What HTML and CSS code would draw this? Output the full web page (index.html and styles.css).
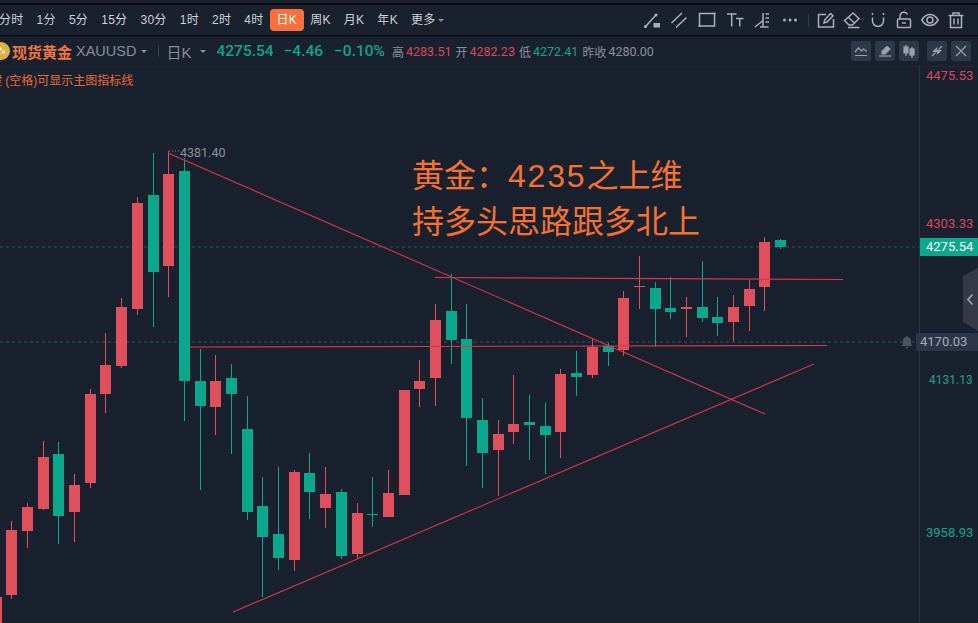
FILE: index.html
```html
<!DOCTYPE html>
<html lang="zh-CN">
<head>
  <meta charset="UTF-8">
  <title>现货黄金 XAUUSD 日K</title>
  <link rel="stylesheet" href="styles.css">
</head>
<body>
  <div class="top-gap"></div>

  <div class="toolbar">
    <div class="periods">
      <span class="period">分时</span>
      <span class="period">1分</span>
      <span class="period">5分</span>
      <span class="period">15分</span>
      <span class="period">30分</span>
      <span class="period">1时</span>
      <span class="period">2时</span>
      <span class="period">4时</span>
      <span class="period active">日K</span>
      <span class="period">周K</span>
      <span class="period">月K</span>
      <span class="period">年K</span>
      <span class="period">更多<i class="caret"></i></span>
    </div>
    <div class="tools">
      <div class="tool-group draw">
        <svg class="tool" viewBox="0 0 18 18"><path d="M2.5 15.5 13 4"/><circle class="solid" cx="2.5" cy="15.5" r="1.6"/><circle class="solid" cx="13" cy="4" r="1.6"/><rect class="solid" x="10.5" y="12" width="6.5" height="4.5"/></svg>
        <svg class="tool" viewBox="0 0 18 18"><path d="M1.5 12 12 2M6 16.5 16.5 6.5"/></svg>
        <svg class="tool" viewBox="0 0 18 18"><rect x="1.5" y="2.5" width="15" height="12.5"/><circle class="solid" cx="1.5" cy="15" r="1.1"/><circle class="solid" cx="16.5" cy="2.5" r="1.1"/></svg>
        <svg class="tool" viewBox="0 0 18 18"><path d="M1 3h9.5M5.7 3v12.5M10 7.5h7.5M13.8 7.5v8"/></svg>
        <svg class="tool" viewBox="0 0 18 18"><path d="M2 16 10 9.5M10 2v14M7 16h8.5M12.5 3h3.5M12.5 7h3.5M12.5 11h3.5"/></svg>
        <svg class="tool" viewBox="0 0 18 18"><circle class="solid" cx="3.5" cy="9" r="1.5"/><circle class="solid" cx="9" cy="9" r="1.5"/><circle class="solid" cx="14.5" cy="9" r="1.5"/></svg>
      </div>
      <span class="tool-sep"></span>
      <div class="tool-group edit">
        <svg class="tool" viewBox="0 0 18 18"><path d="M9 3.5H1.5V16h15V8M7 12l.6-3L13.5 2.5l2.5 2.3L10 11Z"/></svg>
        <svg class="tool" viewBox="0 0 18 18"><path d="M1.5 9.5 10 2l6 5.5-6.5 6.5H6ZM5.5 6.5l6 5.5M5 16.5h11.5"/></svg>
        <svg class="tool" viewBox="0 0 18 18"><path d="M3.5 2v2M14.5 2v2M3.5 6.5V10a5.5 5.5 0 0 0 11 0V6.500"/></svg>
        <svg class="tool" viewBox="0 0 18 18"><path d="M5 8V5a4 4 0 0 1 7.600-1.500"/><rect x="2.500" y="8" width="13" height="8.500" rx="1"/><path d="M7 12h4"/></svg>
        <svg class="tool" viewBox="0 0 18 18"><path d="M.8 9C3 5.300 6 3.500 9 3.500S15 5.300 17.200 9C15 12.700 12 14.500 9 14.500S3 12.700.8 9Z"/><circle cx="9" cy="9" r="3"/></svg>
        <svg class="tool" viewBox="0 0 18 18"><path d="M1.500 4.500h15M6 4.500V2h6v2.500M3.500 4.500V16.500h11V4.500M7 7.500v6M11 7.500v6"/></svg>
      </div>
    </div>
  </div>

  <div class="quote-bar">
    <svg class="coin" viewBox="0 0 18 18"><circle cx="9" cy="9" r="9"/><circle class="coin-mark" cx="8" cy="7" r="1.700"/><circle class="coin-mark" cx="11.500" cy="10" r="1.700"/><circle class="coin-mark" cx="6.500" cy="11.500" r="1.700"/></svg>
    <span class="name">现货黄金</span>
    <span class="symbol">XAUUSD</span><i class="caret symbol-caret"></i>
    <span class="quote-sep"></span>
    <span class="interval">日K</span><i class="caret interval-caret"></i>
    <span class="last">4275.54</span>
    <span class="change">−4.46</span>
    <span class="change pct">−0.10%</span>
    <div class="ohlc">
      <span>高</span><b class="up">4283.51</b>
      <span>开</span><b class="up">4282.23</b>
      <span>低</span><b class="down">4272.41</b>
      <span>昨收</span><b>4280.00</b>
    </div>
    <div class="chart-btns">
      <button class="chart-btn"><svg viewBox="0 0 20 20"><path d="M4 11l3.500-4 3 3 2-2 3.500 2.500M4 14.500h12"/></svg></button>
      <button class="chart-btn"><svg viewBox="0 0 20 20"><path class="fill" d="M7 10.500 12 5.500l3 2.500-5 5H7Z"/><path d="M4 15h12"/></svg></button>
      <button class="chart-btn"><svg viewBox="0 0 20 20"><path d="M7 4v11M13 6v11"/><rect class="fill" x="5" y="6" width="4" height="6"/><rect class="fill" x="11" y="8" width="4" height="6"/></svg></button>
      <button class="chart-btn gap"><svg viewBox="0 0 20 20"><path d="M5 15l3.500-3.500M15 5l-3.500 3.500"/><path class="fill" d="M9.500 10.500v-3l-3 3ZM10.500 9.500v3l3-3Z"/></svg></button>
      <button class="chart-btn"><svg viewBox="0 0 20 20"><path d="M5 5l10 10M15 5 5 15"/></svg></button>
    </div>
  </div>

  <div class="chart">
    <svg id="plot" class="plot" viewBox="0 67 978 556"></svg>

    <div class="hint">键 (空格)可显示主图指标线</div>
    <div class="peak">4381.40</div>

    <div class="note">
      <div>黄金：<span class="note-num">4235</span>之上维</div>
      <div>持多头思路跟多北上</div>
    </div>

    <div class="axis-label red l1">4475.53</div>
    <div class="axis-label red l2">4303.33</div>
    <div class="axis-tag now">4275.54</div>
    <div class="axis-tag line">4170.03</div>
    <div class="axis-label green l3">4131.13</div>
    <div class="axis-label green l4">3958.93</div>

    <svg class="bell" viewBox="0 0 14 14"><path d="M7 1a1 1 0 0 1 1 1c2 .5 3 2 3 4v3l1.500 2h-11L3 9V6c0-2 1-3.500 3-4a1 1 0 0 1 1-1ZM5.500 12h3a1.500 1.500 0 0 1-3 0Z"/></svg>

    <div class="side-handle">
      <svg viewBox="0 0 15 63"><path class="handle-bg" d="M15 0 0 8v46l15 9Z"/><path class="handle-arrow" d="M9.500 26.500 5 31.500l4.500 5"/></svg>
    </div>
  </div>

  <script src="chart.js"></script>
</body>
</html>
```

FILE: styles.css
```css
* {
  box-sizing: border-box;
}
html, body {
  height: 100%;
}
body {
  margin: 0;
  overflow: hidden;
  background: #1a212e;
  color: #c3c7ce;
  font-family: "Liberation Sans", "Noto Sans CJK SC", sans-serif;
  display: flex;
  flex-direction: column;
}
.top-gap {
  height: 5px;
  flex: none;
  border-bottom: 2px solid #08090c;
}
.toolbar {
  height: 31px;
  flex: none;
  display: flex;
  justify-content: space-between;
  align-items: center;
  border-bottom: 1px solid #08090c;
  padding-right: 13px;
}
.periods {
  display: flex;
  align-items: center;
  margin-left: -7.500px;
}
.period {
  font-size: 12px;
  letter-spacing: .3px;
  line-height: 22px;
  padding: 0 6.5px;
  color: #ced1d6;
  white-space: nowrap;
}
.period.active {
  background: #fb6f3b;
  color: #fff;
  border-radius: 4px;
}
.caret {
  display: inline-block;
  width: 0;
  height: 0;
  border-left: 3px solid transparent;
  border-right: 3px solid transparent;
  border-top: 3.500px solid #8a909a;
  margin-left: 2px;
  vertical-align: 2px;
}
.tools {
  display: flex;
  align-items: center;
}
.tool-group {
  display: flex;
  align-items: center;
}
.tool-group.draw {
  gap: 9.700px;
}
.tool-group.edit {
  gap: 8px;
}
.tool {
  width: 18px;
  height: 18px;
  fill: none;
  stroke: #aab0ba;
  stroke-width: 1.500;
}
.tool .solid {
  fill: #aab0ba;
  stroke: none;
}
.tool-sep {
  width: 1px;
  height: 13px;
  background: #333b49;
  margin: 0 8.500px;
}

.quote-bar {
  height: 31px;
  flex: none;
  display: flex;
  align-items: center;
  border-bottom: 1px solid #1f2835;
  padding-right: 7px;
  white-space: nowrap;
}
.coin {
  width: 18px;
  height: 18px;
  margin-left: -8px;
  flex: none;
  fill: #e2b23f;
}
.coin .coin-mark {
  fill: #fbeecb;
}
.name {
  margin-left: 2px;
  font-size: 15px;
  font-weight: 700;
  color: #ef7540;
}
.symbol {
  margin-left: 4px;
  font-size: 14.500px;
  color: #878d98;
}
.symbol-caret {
  margin-left: 5px;
  vertical-align: 0;
}
.quote-sep {
  width: 1px;
  height: 12px;
  background: #3a4250;
  margin: 0 7px 0 11px;
}
.interval {
  font-size: 15px;
  color: #878d98;
}
.interval-caret {
  margin-left: 9px;
}
.last, .change {
  font-family: Roboto, "Noto Sans CJK SC", sans-serif;
  font-size: 15.500px;
  font-weight: 500;
  color: #0fa68a;
}
.last {
  margin-left: 10px;
}
.change {
  margin-left: 10px;
}
.change.pct {
  margin-left: 11px;
}
.ohlc {
  margin-left: 7px;
  display: flex;
  align-items: center;
  font-size: 12px;
  color: #8b919b;
}
.ohlc b {
  font-family: Roboto, sans-serif;
  font-size: 12.500px;
  font-weight: 400;
  margin: 0 4px 0 2px;
}
.ohlc .up {
  color: #d9475a;
}
.ohlc .down {
  color: #0fa68a;
}
.chart-btns {
  margin-left: auto;
  display: flex;
  gap: 4px;
}
.chart-btn {
  width: 20px;
  height: 20px;
  padding: 0;
  border: 0;
  border-radius: 3px;
  background: #2f3848;
}
.chart-btn.gap {
  margin-left: 4px;
}
.chart-btn svg {
  display: block;
  fill: none;
  stroke: #9ba1ab;
  stroke-width: 1.200;
}
.chart-btn .fill {
  fill: #9ba1ab;
}

.chart {
  flex: 1;
  position: relative;
  overflow: hidden;
}
.plot {
  position: absolute;
  left: 0;
  top: 0;
  width: 978px;
  height: 556px;
}
.hint {
  position: absolute;
  left: -10px;
  top: 6px;
  font-size: 12px;
  line-height: 17px;
  color: #e8683a;
  white-space: nowrap;
}
.peak {
  position: absolute;
  left: 180px;
  top: 78px;
  font-family: Roboto, sans-serif;
  font-size: 12.500px;
  line-height: 16px;
  color: #8b929e;
}
.note {
  position: absolute;
  left: 412px;
  top: 86px;
  font-size: 32px;
  line-height: 46px;
  color: #f5712f;
  white-space: nowrap;
}
.note-num {
  letter-spacing: 1.800px;
}
.axis-label, .axis-tag {
  position: absolute;
  font-family: Roboto, sans-serif;
  font-size: 13px;
  line-height: 18px;
}
.axis-label {
  left: 926px;
}
.axis-label.red {
  color: #d9475a;
}
.axis-label.green {
  color: #0fa68a;
}
.l1 { top: 0; }
.l2 { top: 148px; }
.l3 { top: 304px; left: 929px; font-size: 12px; }
.l4 { top: 457px; }
.axis-tag {
  right: 0;
  padding-left: 6px;
}
.axis-tag.now {
  left: 920px;
  top: 171px;
  background: #0aa88d;
  color: #fff;
}
.axis-tag.line {
  left: 916px;
  top: 266px;
  padding-left: 4px;
  background: #2c3648;
  color: #a6abb5;
  border-radius: 2px 0 0 2px;
}
.bell {
  position: absolute;
  left: 900px;
  top: 268px;
  width: 14px;
  height: 14px;
  fill: #4d5461;
}
.side-handle {
  position: absolute;
  right: 0;
  top: 201px;
  width: 15px;
  height: 63px;
}
.side-handle svg {
  display: block;
}
.handle-bg {
  fill: #343a48;
}
.handle-arrow {
  fill: none;
  stroke: #9aa0aa;
  stroke-width: 1.800;
}
```

FILE: chart.js
```js
const RED = '#df4f5c';
const GREEN = '#09a88c';
const LINE = '#d8364a';

// left edge, wick top, body top, body bottom, wick bottom, r/g
const candles = [
  [-9, 597, 597, 640, 640, 'r'],
  [6, 521, 530, 595, 599, 'r'],
  [22, 503, 507, 531, 548, 'r'],
  [38, 441, 457, 509, 510, 'r'],
  [53, 442, 454, 516, 544, 'g'],
  [69, 474, 485, 512, 542, 'r'],
  [85, 389, 394, 483, 488, 'r'],
  [100, 333, 365, 394, 413, 'r'],
  [116, 298, 307, 366, 368, 'r'],
  [132, 197, 203, 309, 315, 'r'],
  [148, 153, 195, 272, 327, 'g'],
  [163, 151, 174, 266, 297, 'r'],
  [179, 158, 171, 381, 421, 'g'],
  [195, 349, 381, 406, 490, 'g'],
  [210, 355, 381, 407, 435, 'r'],
  [226, 364, 378, 394, 454, 'g'],
  [242, 396, 429, 512, 520, 'g'],
  [257, 477, 506, 537, 597, 'g'],
  [273, 467, 534, 558, 570, 'g'],
  [289, 470, 472, 560, 571, 'r'],
  [304, 453, 473, 492, 519, 'g'],
  [320, 467, 494, 508, 528, 'r'],
  [336, 489, 492, 556, 559, 'g'],
  [352, 503, 513, 554, 559, 'r'],
  [367, 477, 514, 515, 527, 'g'],
  [383, 470, 493, 517, 517, 'r'],
  [399, 390, 390, 495, 495, 'r'],
  [414, 360, 381, 389, 407, 'r'],
  [430, 304, 320, 378, 406, 'r'],
  [446, 274, 311, 340, 364, 'g'],
  [461, 304, 339, 418, 466, 'g'],
  [477, 398, 420, 453, 488, 'g'],
  [493, 420, 434, 450, 496, 'r'],
  [508, 375, 424, 432, 444, 'r'],
  [524, 395, 422, 425, 460, 'g'],
  [540, 403, 426, 435, 474, 'g'],
  [555, 369, 374, 432, 458, 'r'],
  [571, 351, 373, 377, 396, 'g'],
  [587, 338, 347, 375, 378, 'r'],
  [603, 343, 346, 352, 366, 'g'],
  [618, 291, 298, 350, 356, 'r'],
  [634, 256, 286, 287, 309, 'r'],
  [650, 282, 288, 309, 347, 'g'],
  [665, 277, 308, 312, 319, 'g'],
  [681, 297, 307, 309, 337, 'r'],
  [697, 261, 307, 318, 322, 'g'],
  [712, 297, 317, 323, 336, 'g'],
  [728, 295, 307, 322, 341, 'r'],
  [744, 280, 289, 306, 331, 'r'],
  [759, 237, 242, 287, 311, 'r'],
  [775, 239, 240, 247, 249, 'g']
];

// x1, y1, x2, y2
const trendLines = [
  [168, 153, 765, 414],
  [233, 612, 814, 364],
  [435, 277.5, 843, 279.5],
  [190, 347, 827, 345.5]
];

const dottedRows = [247, 342];

let html = '';

dottedRows.forEach(y => {
  html += `<line x1="0" y1="${y}" x2="919" y2="${y}" stroke="#1f4a49" stroke-width="1.500" stroke-dasharray="3 3"/>`;
});

html += '<line x1="919.500" y1="67" x2="919.500" y2="623" stroke="#2a3340"/>';

candles.forEach(([x, wickTop, top, bottom, wickBottom, side]) => {
  const color = side === 'r' ? RED : GREEN;
  html += `<rect x="${x + 5}" y="${wickTop}" width="1" height="${wickBottom - wickTop}" fill="${color}" shape-rendering="crispEdges"/>`;
  html += `<rect x="${x}" y="${top}" width="11" height="${bottom - top}" fill="${color}" shape-rendering="crispEdges"/>`;
});

trendLines.forEach(([x1, y1, x2, y2]) => {
  html += `<line x1="${x1}" y1="${y1}" x2="${x2}" y2="${y2}" stroke="${LINE}" stroke-width="1.100"/>`;
});

// little ticks in front of the high price
html += '<line x1="169" y1="151" x2="179" y2="151" stroke="#8b929e" stroke-dasharray="1 2"/>';

document.getElementById('plot').innerHTML = html;
```
